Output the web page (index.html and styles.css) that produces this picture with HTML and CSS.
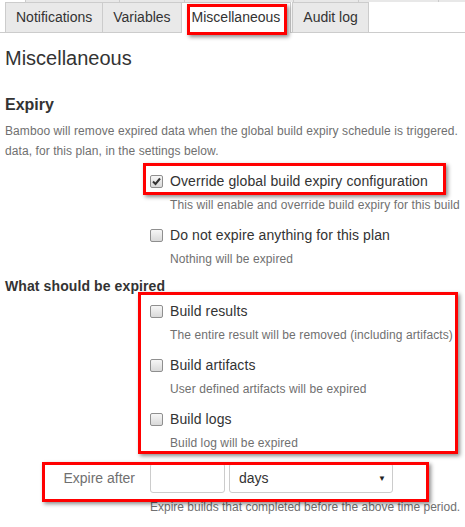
FILE: index.html
```html
<html lang="en">
<head>
    <meta charset="UTF-8">
    <meta name="viewport" content="width=device-width, initial-scale=1.0">
    <title>Plan configuration - Miscellaneous</title>
    <link rel="stylesheet" href="styles.css">
</head>
<body>
<div class="page">
    <div class="strip">
        <span class="strip-gap"></span>
        <span class="strip-cell w94"></span>
        <span class="strip-cell w65"></span>
        <span class="strip-cell w109"></span>
        <span class="strip-cell w65"></span>
        <span class="strip-cell w80"></span>
        <span class="strip-cell rest"></span>
    </div>

    <ul class="tabs">
        <li>Notifications</li>
        <li>Variables</li>
        <li class="active">Miscellaneous</li>
        <li>Audit log</li>
    </ul>

    <div class="content">
        <h1>Miscellaneous</h1>

        <h2>Expiry</h2>
        <p class="intro">Bamboo will remove expired data when the global build expiry schedule is triggered.<br>data, for this plan, in the settings below.</p>

        <div class="checks">
            <div class="check">
                <label><span class="box checked"><svg width="11" height="11" viewBox="0 0 11 11"><path d="M2 5.5 L4.5 8 L9 2.5" fill="none" stroke="#333" stroke-width="2"/></svg></span>Override global build expiry configuration</label>
                <div class="hint">This will enable and override build expiry for this build</div>
            </div>
            <div class="check">
                <label><span class="box"></span>Do not expire anything for this plan</label>
                <div class="hint">Nothing will be expired</div>
            </div>
        </div>

        <h3>What should be expired</h3>

        <div class="checks">
            <div class="check first">
                <label><span class="box"></span>Build results</label>
                <div class="hint">The entire result will be removed (including artifacts)</div>
            </div>
            <div class="check">
                <label><span class="box"></span>Build artifacts</label>
                <div class="hint">User defined artifacts will be expired</div>
            </div>
            <div class="check">
                <label><span class="box"></span>Build logs</label>
                <div class="hint">Build log will be expired</div>
            </div>
        </div>

        <div class="field">
            <label class="field-label" for="expiry-period">Expire after</label>
            <input type="text" id="expiry-period" class="text">
            <div class="select">days<span class="arrow">&#9660;</span></div>
        </div>
        <div class="field-hint">Expire builds that completed before the above time period.</div>
    </div>

    <!-- red annotation boxes drawn over the screenshot -->
    <div class="callout callout-tab"></div>
    <div class="callout callout-override"></div>
    <div class="callout callout-items"></div>
    <div class="callout callout-period"></div>
</div>
</body>
</html>
```

FILE: styles.css
```css
body {
    margin: 0;
    overflow: hidden;
    background: #fff;
    font-family: "Liberation Sans", Arial, sans-serif;
    color: #333;
}

.page {
    position: relative;
    width: 465px;
    height: 527px;
    overflow: hidden;
}

.strip {
    display: flex;
    height: 2px;
}
.strip-gap {
    width: 25px;
}
.strip-cell {
    background: #e8e8e8;
    border-left: 1px solid #ccc;
}
.w94 { width: 93px; }
.w65 { width: 64px; }
.w109 { width: 108px; }
.w80 { width: 79px; }
.rest { flex: 1; }

.tabs {
    display: flex;
    list-style: none;
    margin: 0;
    padding: 0 0 0 5px;
    border-bottom: 1px solid #ccc;
}
.tabs li {
    height: 29px;
    line-height: 29px;
    padding: 0 10px;
    font-size: 14px;
    color: #333;
    background: #e9e9e9;
    border: 1px solid #ccc;
    border-bottom: none;
    margin-right: -1px;
}
.tabs li.active {
    background: #fff;
    height: 30px;
    margin-bottom: -1px;
    margin-right: 1px;
}

.content {
    padding-left: 5px;
    white-space: nowrap;
}

h1 {
    margin: 13px 0 0;
    font-size: 20px;
    line-height: 24px;
    font-weight: normal;
    color: #333;
}

h2 {
    margin: 25px 0 0;
    font-size: 16px;
    line-height: 20px;
    font-weight: bold;
    color: #333;
}

h3 {
    margin: 7px 0 0;
    font-size: 14px;
    line-height: 20px;
    font-weight: bold;
    letter-spacing: 0.1px;
    color: #333;
}

.intro {
    margin: 6px 0 0;
    font-size: 12px;
    line-height: 20px;
    letter-spacing: 0.08px;
    color: #707070;
}

.checks {
    margin-left: 145px;
}
.check {
    margin-top: 10px;
}
.check.first {
    margin-top: 5px;
}
.check label {
    display: flex;
    align-items: center;
    font-size: 14px;
    line-height: 20px;
    letter-spacing: 0.1px;
    color: #333;
}
.box {
    display: flex;
    align-items: center;
    justify-content: center;
    box-sizing: border-box;
    width: 13px;
    height: 13px;
    margin-right: 7px;
    border: 1px solid #8f8f8f;
    border-radius: 2px;
    background: linear-gradient(#f6f6f6, #d9d9d9);
}
.hint {
    margin: 4px 0 0 20px;
    font-size: 12px;
    line-height: 20px;
    letter-spacing: 0.1px;
    color: #707070;
}

.field {
    display: flex;
    align-items: center;
    margin-top: 10px;
    height: 30px;
}
.field-label {
    box-sizing: border-box;
    width: 145px;
    padding-right: 15px;
    text-align: right;
    font-size: 14px;
    color: #707070;
}
input.text {
    box-sizing: border-box;
    width: 75px;
    height: 30px;
    margin: 0;
    border: 1px solid #ccc;
    border-radius: 3px;
}
.select {
    display: flex;
    align-items: center;
    justify-content: space-between;
    box-sizing: border-box;
    width: 164px;
    height: 30px;
    margin-left: 4px;
    padding: 0 6px 0 9px;
    border: 1px solid #ccc;
    border-radius: 3px;
    font-size: 14px;
    color: #333;
}
.arrow {
    font-size: 8px;
    color: #222;
}
.field-hint {
    margin: 4px 0 0 145px;
    font-size: 12px;
    line-height: 20px;
    color: #707070;
}

.callout {
    position: absolute;
    box-sizing: border-box;
    border: 3px solid #f00;
    box-shadow: 2px 2px 4px rgba(0, 0, 0, 0.45);
}
.callout-tab { left: 187px; top: 4px; width: 100px; height: 31px; }
.callout-override { left: 143px; top: 163px; width: 303px; height: 32px; }
.callout-items { left: 138px; top: 292px; width: 320px; height: 162px; }
.callout-period { left: 42px; top: 462px; width: 387px; height: 40px; }
```
